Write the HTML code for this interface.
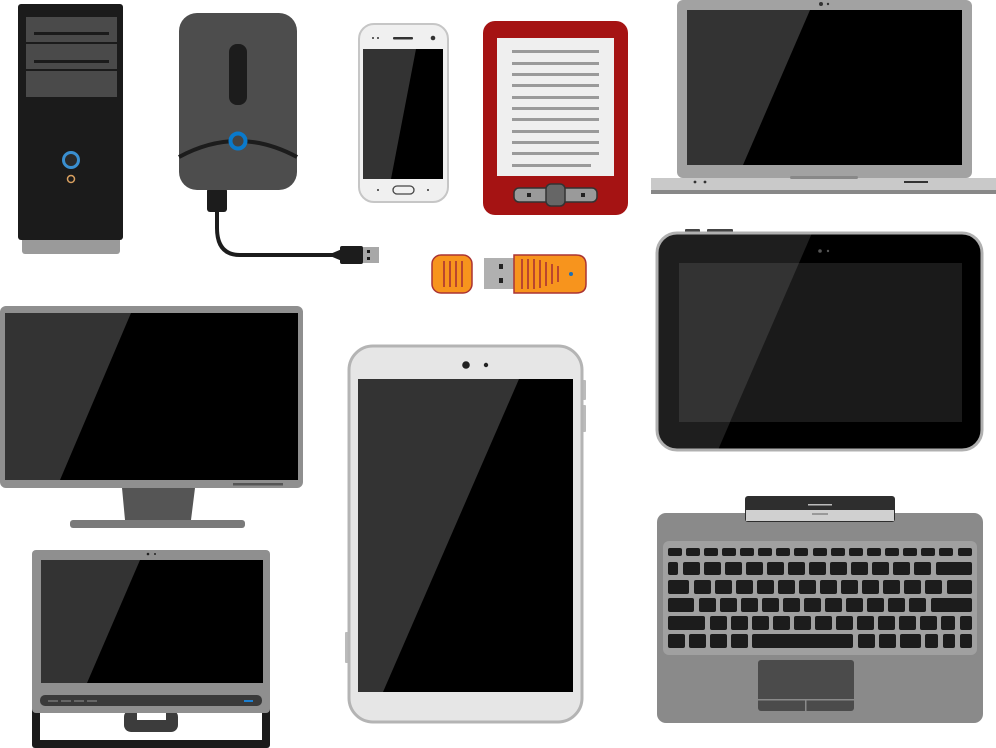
<!DOCTYPE html>
<html><head><meta charset="utf-8"><style>html,body{margin:0;padding:0;background:#fff}svg{display:block}</style></head>
<body>
<svg width="996" height="748" viewBox="0 0 996 748" xmlns="http://www.w3.org/2000/svg">
<defs><clipPath id="tb"><rect x="657" y="233" width="325" height="217" rx="20"/></clipPath></defs>
<!-- Tower -->
<rect x="22" y="236" width="98" height="18" rx="3" fill="#9a9a9a"/>
<rect x="18" y="4" width="105" height="236" rx="3" fill="#1b1b1b"/>
<rect x="26" y="17" width="91" height="25" fill="#4a4a4a"/>
<rect x="26" y="44" width="91" height="25" fill="#4a4a4a"/>
<rect x="26" y="71" width="91" height="26" fill="#4a4a4a"/>
<rect x="34" y="32" width="75" height="3" fill="#1b1b1b"/>
<rect x="34" y="60" width="75" height="3" fill="#1b1b1b"/>
<circle cx="71" cy="160" r="7.5" fill="#2a2a2a" stroke="#3a8fd0" stroke-width="3"/>
<circle cx="71" cy="179" r="3.5" fill="none" stroke="#d9a060" stroke-width="1.5"/>
<!-- HDD -->
<path d="M217 210 V228 Q217 255 240 255 H333 L340 252 V258 L333 255" fill="none" stroke="#1c1c1c" stroke-width="4"/>
<rect x="207" y="188" width="20" height="24" rx="3" fill="#1c1c1c"/>
<rect x="340" y="246" width="23" height="18" rx="2" fill="#1c1c1c"/>
<rect x="363" y="247" width="16" height="16" fill="#a8a8a8"/>
<rect x="367" y="250" width="3" height="3" fill="#1c1c1c"/><rect x="367" y="257" width="3" height="3" fill="#1c1c1c"/>
<rect x="179" y="13" width="118" height="177" rx="18" fill="#4d4d4d"/>
<rect x="229" y="44" width="18" height="61" rx="8" fill="#1c1c1c"/>
<path d="M179 157 Q238 125 297 157" fill="none" stroke="#1c1c1c" stroke-width="4"/>
<circle cx="238" cy="141" r="7.5" fill="#444" stroke="#0a7acc" stroke-width="4"/>
<!-- Phone -->
<rect x="359" y="24" width="89" height="178" rx="15" fill="#f0f0f0" stroke="#c6c6c6" stroke-width="2"/>
<rect x="363" y="49" width="80" height="130" fill="#000"/>
<polygon points="363,49 416,49 391,179 363,179" fill="#333"/>
<rect x="393" y="37" width="20" height="2.5" rx="1" fill="#333"/>
<circle cx="433" cy="38" r="2.3" fill="#333"/>
<circle cx="373" cy="38" r="1" fill="#333"/><circle cx="378" cy="38" r="1" fill="#333"/>
<rect x="393" y="186" width="21" height="8" rx="4" fill="none" stroke="#444" stroke-width="1.3"/>
<circle cx="378" cy="190" r="1" fill="#333"/><circle cx="428" cy="190" r="1" fill="#333"/>
<!-- E-reader -->
<rect x="483" y="21" width="145" height="194" rx="12" fill="#a51313"/>
<rect x="497" y="38" width="117" height="138" fill="#efefef"/>
<g fill="#9a9a9a">
<rect x="512" y="50" width="87" height="3"/><rect x="512" y="62" width="87" height="3"/><rect x="512" y="73" width="87" height="3"/><rect x="512" y="84" width="87" height="3"/><rect x="512" y="96" width="87" height="3"/><rect x="512" y="107" width="87" height="3"/><rect x="512" y="118" width="87" height="3"/><rect x="512" y="130" width="87" height="3"/><rect x="512" y="141" width="87" height="3"/><rect x="512" y="152" width="87" height="3"/><rect x="512" y="164" width="79" height="3"/>
</g>
<rect x="514" y="188" width="83" height="14" rx="5" fill="#9a9a9a" stroke="#333" stroke-width="1.5"/>
<rect x="546" y="184" width="19" height="22" rx="5" fill="#666" stroke="#333" stroke-width="1.5"/>
<rect x="527" y="193" width="4" height="4" fill="#222"/><rect x="581" y="193" width="4" height="4" fill="#222"/>
<!-- Laptop -->
<rect x="677" y="0" width="295" height="178" rx="6" fill="#a2a2a2"/>
<rect x="687" y="10" width="275" height="155" fill="#000"/>
<polygon points="687,10 810,10 743,165 687,165" fill="#333"/>
<circle cx="821" cy="4" r="2" fill="#333"/><circle cx="828" cy="4" r="1.2" fill="#333"/>
<path d="M651 178 H996 V190 Q996 194 990 194 H658 Q651 194 651 188 Z" fill="#c9c9c9"/>
<rect x="651" y="190" width="345" height="4" fill="#888"/>
<rect x="790" y="176" width="68" height="3" rx="1.5" fill="#888"/>
<circle cx="695" cy="182" r="1.4" fill="#333"/><circle cx="705" cy="182" r="1.4" fill="#333"/>
<rect x="904" y="181" width="24" height="2" fill="#333"/>
<!-- USB stick -->
<rect x="432" y="255" width="40" height="38" rx="9" fill="#f7941d" stroke="#a33" stroke-width="1.5"/>
<rect x="484" y="258" width="30" height="31" fill="#b0b0b0"/>
<rect x="499" y="264" width="4" height="5" fill="#222"/><rect x="499" y="278" width="4" height="5" fill="#222"/>
<path d="M514 255 H576 Q586 255 586 265 V284 Q586 293 576 293 H514 Z" fill="#f7941d" stroke="#a33" stroke-width="1.5"/>
<g stroke="#a33" stroke-width="1.6">
<line x1="444" y1="261" x2="444" y2="287"/><line x1="450" y1="261" x2="450" y2="287"/><line x1="456" y1="261" x2="456" y2="287"/><line x1="462" y1="261" x2="462" y2="287"/>
<line x1="522" y1="259" x2="522" y2="289"/><line x1="528" y1="259" x2="528" y2="289"/><line x1="534" y1="259" x2="534" y2="289"/><line x1="540" y1="260" x2="540" y2="288"/><line x1="546" y1="262" x2="546" y2="286"/><line x1="552" y1="264" x2="552" y2="284"/><line x1="558" y1="266" x2="558" y2="282"/>
</g>
<circle cx="571" cy="274" r="2" fill="#1c6fb5"/>
<!-- Right tablet -->
<rect x="685" y="229" width="15" height="4" rx="1" fill="#444"/><rect x="707" y="229" width="26" height="4" rx="1" fill="#444"/>
<rect x="657" y="233" width="325" height="217" rx="20" fill="#000"/>
<polygon clip-path="url(#tb)" points="650,233 812,233 718,450 650,450" fill="#1e1e1e"/>
<rect x="657" y="233" width="325" height="217" rx="20" fill="none" stroke="#b0b0b0" stroke-width="3"/>
<rect x="679" y="263" width="283" height="159" fill="#1a1a1a"/>
<polygon points="679,263 799,263 730,422 679,422" fill="#333"/>
<circle cx="820" cy="251" r="1.8" fill="#555"/><circle cx="828" cy="251" r="1.2" fill="#555"/>
<!-- Monitor -->
<polygon points="122,488 195,488 191,520 125,520" fill="#555"/>
<rect x="70" y="520" width="175" height="8" rx="3" fill="#7a7a7a"/>
<rect x="0" y="306" width="303" height="182" rx="6" fill="#8f8f8f"/>
<rect x="5" y="313" width="293" height="167" fill="#000"/>
<polygon points="5,313 131,313 60,480 5,480" fill="#333"/>
<rect x="233" y="483" width="50" height="2.5" fill="#555"/>
<!-- AIO -->
<rect x="32" y="706" width="238" height="42" rx="3" fill="#1b1b1b"/>
<rect x="40" y="713" width="222" height="27" fill="#fff"/>
<rect x="124" y="710" width="54" height="22" rx="7" fill="#3c3c3c"/>
<rect x="137" y="710" width="29" height="10" fill="#fff"/>
<rect x="32" y="550" width="238" height="163" rx="4" fill="#8f8f8f"/>
<rect x="41" y="560" width="222" height="123" fill="#000"/>
<polygon points="41,560 140,560 87,683 41,683" fill="#333"/>
<rect x="40" y="695" width="222" height="11" rx="5" fill="#3a3a3a"/>
<g fill="#666"><rect x="48" y="700" width="10" height="2"/><rect x="61" y="700" width="10" height="2"/><rect x="74" y="700" width="10" height="2"/><rect x="87" y="700" width="10" height="2"/></g>
<rect x="244" y="700" width="9" height="2" fill="#1c7fd0"/>
<circle cx="148" cy="554" r="1.3" fill="#222"/><circle cx="155" cy="554" r="1" fill="#222"/>
<!-- Big tablet -->
<rect x="582" y="380" width="4" height="20" rx="1" fill="#bbb"/><rect x="582" y="405" width="4" height="27" rx="1" fill="#bbb"/>
<rect x="345" y="632" width="4" height="31" rx="1" fill="#bbb"/>
<rect x="349" y="346" width="233" height="376" rx="24" fill="#e6e6e6" stroke="#b4b4b4" stroke-width="3"/>
<rect x="358" y="379" width="215" height="313" fill="#000"/>
<polygon points="358,379 519,379 383,692 358,692" fill="#333"/>
<circle cx="466" cy="365" r="3.8" fill="#222"/><circle cx="486" cy="365" r="2.2" fill="#222"/>
<!-- Keyboard dock -->
<rect x="657" y="513" width="326" height="210" rx="9" fill="#8a8a8a"/>
<rect x="745" y="496" width="150" height="26" rx="3" fill="#2e2e2e"/>
<rect x="746" y="510" width="148" height="11" fill="#d0d0d0"/>
<rect x="808" y="504" width="24" height="1.5" fill="#bbb"/>
<rect x="812" y="513" width="16" height="2" fill="#999"/>
<rect x="663" y="541" width="314" height="114" rx="6" fill="#a0a0a0"/>
<g fill="#1c1c1c">
<rect x="668" y="548" width="14" height="8" rx="2"/><rect x="686" y="548" width="14" height="8" rx="2"/><rect x="704" y="548" width="14" height="8" rx="2"/><rect x="722" y="548" width="14" height="8" rx="2"/><rect x="740" y="548" width="14" height="8" rx="2"/><rect x="758" y="548" width="14" height="8" rx="2"/><rect x="776" y="548" width="14" height="8" rx="2"/><rect x="794" y="548" width="14" height="8" rx="2"/><rect x="813" y="548" width="14" height="8" rx="2"/><rect x="831" y="548" width="14" height="8" rx="2"/><rect x="849" y="548" width="14" height="8" rx="2"/><rect x="867" y="548" width="14" height="8" rx="2"/><rect x="885" y="548" width="14" height="8" rx="2"/><rect x="903" y="548" width="14" height="8" rx="2"/><rect x="921" y="548" width="14" height="8" rx="2"/><rect x="939" y="548" width="14" height="8" rx="2"/><rect x="958" y="548" width="14" height="8" rx="2"/>
<rect x="668" y="562" width="10" height="13" rx="2"/><rect x="683" y="562" width="17" height="13" rx="2"/><rect x="704" y="562" width="17" height="13" rx="2"/><rect x="725" y="562" width="17" height="13" rx="2"/><rect x="746" y="562" width="17" height="13" rx="2"/><rect x="767" y="562" width="17" height="13" rx="2"/><rect x="788" y="562" width="17" height="13" rx="2"/><rect x="809" y="562" width="17" height="13" rx="2"/><rect x="830" y="562" width="17" height="13" rx="2"/><rect x="851" y="562" width="17" height="13" rx="2"/><rect x="872" y="562" width="17" height="13" rx="2"/><rect x="893" y="562" width="17" height="13" rx="2"/><rect x="914" y="562" width="17" height="13" rx="2"/><rect x="936" y="562" width="36" height="13" rx="2"/>
<rect x="668" y="580" width="21" height="14" rx="2"/><rect x="694" y="580" width="17" height="14" rx="2"/><rect x="715" y="580" width="17" height="14" rx="2"/><rect x="736" y="580" width="17" height="14" rx="2"/><rect x="757" y="580" width="17" height="14" rx="2"/><rect x="778" y="580" width="17" height="14" rx="2"/><rect x="799" y="580" width="17" height="14" rx="2"/><rect x="820" y="580" width="17" height="14" rx="2"/><rect x="841" y="580" width="17" height="14" rx="2"/><rect x="862" y="580" width="17" height="14" rx="2"/><rect x="883" y="580" width="17" height="14" rx="2"/><rect x="904" y="580" width="17" height="14" rx="2"/><rect x="925" y="580" width="17" height="14" rx="2"/><rect x="947" y="580" width="25" height="14" rx="2"/>
<rect x="668" y="598" width="26" height="14" rx="2"/><rect x="699" y="598" width="17" height="14" rx="2"/><rect x="720" y="598" width="17" height="14" rx="2"/><rect x="741" y="598" width="17" height="14" rx="2"/><rect x="762" y="598" width="17" height="14" rx="2"/><rect x="783" y="598" width="17" height="14" rx="2"/><rect x="804" y="598" width="17" height="14" rx="2"/><rect x="825" y="598" width="17" height="14" rx="2"/><rect x="846" y="598" width="17" height="14" rx="2"/><rect x="867" y="598" width="17" height="14" rx="2"/><rect x="888" y="598" width="17" height="14" rx="2"/><rect x="909" y="598" width="17" height="14" rx="2"/><rect x="931" y="598" width="41" height="14" rx="2"/>
<rect x="668" y="616" width="37" height="14" rx="2"/><rect x="710" y="616" width="17" height="14" rx="2"/><rect x="731" y="616" width="17" height="14" rx="2"/><rect x="752" y="616" width="17" height="14" rx="2"/><rect x="773" y="616" width="17" height="14" rx="2"/><rect x="794" y="616" width="17" height="14" rx="2"/><rect x="815" y="616" width="17" height="14" rx="2"/><rect x="836" y="616" width="17" height="14" rx="2"/><rect x="857" y="616" width="17" height="14" rx="2"/><rect x="878" y="616" width="17" height="14" rx="2"/><rect x="899" y="616" width="17" height="14" rx="2"/><rect x="920" y="616" width="17" height="14" rx="2"/><rect x="941" y="616" width="14" height="14" rx="2"/><rect x="960" y="616" width="12" height="14" rx="2"/>
<rect x="668" y="634" width="17" height="14" rx="2"/><rect x="689" y="634" width="17" height="14" rx="2"/><rect x="710" y="634" width="17" height="14" rx="2"/><rect x="731" y="634" width="17" height="14" rx="2"/><rect x="752" y="634" width="101" height="14" rx="2"/><rect x="858" y="634" width="17" height="14" rx="2"/><rect x="879" y="634" width="17" height="14" rx="2"/><rect x="900" y="634" width="21" height="14" rx="2"/><rect x="925" y="634" width="13" height="14" rx="2"/><rect x="943" y="634" width="12" height="14" rx="2"/><rect x="960" y="634" width="12" height="14" rx="2"/>
</g>
<rect x="758" y="660" width="96" height="51" rx="3" fill="#4b4b4b"/>
<rect x="758" y="699" width="96" height="1.5" fill="#8a8a8a"/>
<rect x="805" y="700" width="1.5" height="11" fill="#8a8a8a"/>
</svg>
</body></html>
